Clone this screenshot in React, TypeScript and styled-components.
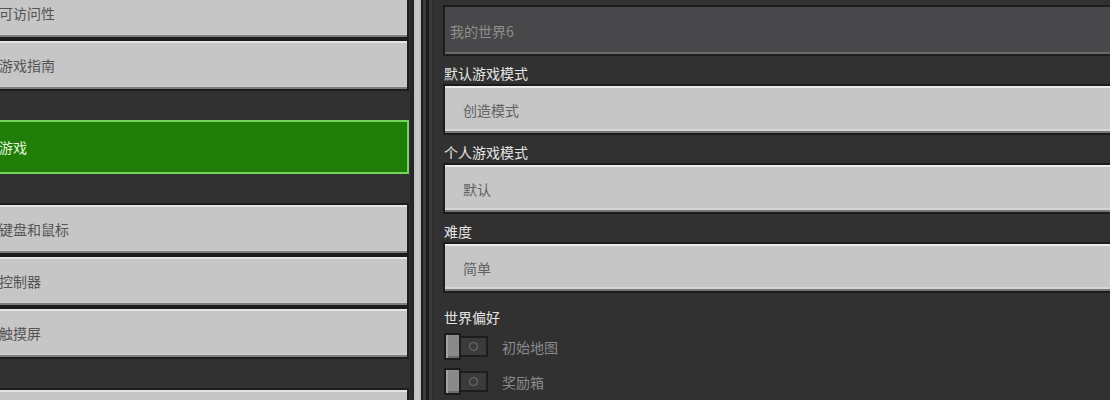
import React from "react";
import styled, { createGlobalStyle } from "styled-components";

const GlobalStyle = createGlobalStyle`
  html, body {
    margin: 0;
    padding: 0;
    height: 400px;
    overflow: hidden;
    background: #313132;
    font-family: "Noto Sans CJK SC", "Noto Sans", sans-serif;
  }
`;

const Page = styled.div`
  display: flex;
  flex-direction: row;
  width: 1110px;
  height: 400px;
  overflow: hidden;
  background: #313132;
`;

const NavPane = styled.nav`
  display: flex;
  flex-direction: column;
  gap: 29px;
  width: 424px;
  flex-shrink: 0;
  margin-left: -15px;
  margin-top: -13px;
`;

const NavGroup = styled.div`
  display: flex;
  flex-direction: column;
`;

const NavButton = styled.div<{ $active?: boolean }>`
  display: flex;
  align-items: center;
  box-sizing: border-box;
  height: ${(p) => (p.$active ? "54px" : "52px")};
  padding-left: 12px;
  font-size: 14px;
  background: ${(p) => (p.$active ? "#1f7d08" : "#c6c6c6")};
  color: ${(p) => (p.$active ? "#e2f4da" : "#545454")};
  border: 2px solid ${(p) => (p.$active ? "#72d65c" : "#1c1c1c")};
  box-shadow: ${(p) =>
    p.$active
      ? "none"
      : "inset 0 2px 0 #e4e4e4, inset 0 -2px 0 #7c7c7c, inset 0 -3px 0 #d0d0d0"};
`;

const Divider = styled.div`
  width: 24px;
  flex-shrink: 0;
  background: linear-gradient(
    to right,
    #313132 0px,
    #313132 1px,
    #262627 1px,
    #262627 5px,
    #bdbdbd 5px,
    #cbcbcb 8px,
    #bdbdbd 12px,
    #1e1e1e 12px,
    #1e1e1e 14px,
    #3c3c3d 14px,
    #3c3c3d 17px,
    #1a1a1a 17px,
    #1a1a1a 20px,
    #3a3a3b 20px,
    #3a3a3b 23px,
    #2c2c2d 23px
  );
`;

const SettingsPane = styled.section`
  display: flex;
  flex-direction: column;
  flex: 1;
  min-width: 0;
  padding: 5px 0 0 10px;
  margin-right: -30px;
`;

const TextField = styled.div`
  display: flex;
  align-items: center;
  box-sizing: border-box;
  height: 51px;
  padding-left: 5px;
  font-size: 14px;
  color: #8e8e8e;
  background: #48484a;
  border: 2px solid #1d1d1e;
  box-shadow: inset 0 -2px 0 #6a6a6b;
`;

const FieldLabel = styled.div`
  box-sizing: border-box;
  height: 28px;
  padding: 9px 0 0 1px;
  font-size: 14px;
  line-height: 16px;
  color: #e4e4e4;
`;

const Select = styled.div`
  display: flex;
  align-items: center;
  box-sizing: border-box;
  height: 51px;
  padding-left: 18px;
  font-size: 14px;
  color: #626262;
  background: #c6c6c6;
  border: 2px solid #1c1c1c;
  box-shadow: inset 0 2px 0 #ebebeb, inset 0 -2px 0 #767676,
    inset 0 -4px 0 #d6d6d6;
`;

const SectionLabel = styled.div`
  padding: 16px 0 0 1px;
  margin-bottom: 8px;
  font-size: 14px;
  line-height: 16px;
  color: #e4e4e4;
`;

const ToggleList = styled.div`
  display: flex;
  flex-direction: column;
  gap: 8px;
`;

const ToggleRow = styled.div`
  display: flex;
  align-items: center;
  height: 27px;
  padding-left: 1px;
`;

const Knob = styled.div`
  box-sizing: border-box;
  width: 17px;
  height: 27px;
  background: #8a8a8a;
  border: 2px solid #1c1c1c;
  box-shadow: inset 2px 0 0 #a2a2a2, inset 0 -2px 0 #6c6c6c;
  position: relative;
  z-index: 1;
`;

const Track = styled.div`
  display: flex;
  align-items: center;
  justify-content: center;
  box-sizing: border-box;
  width: 29px;
  height: 21px;
  margin-left: -2px;
  background: #3b3b3c;
  border: 2px solid #1e1e1e;
`;

const Ring = styled.span`
  box-sizing: border-box;
  width: 9px;
  height: 9px;
  border-radius: 50%;
  border: 1.5px solid #747474;
`;

const ToggleLabel = styled.span`
  margin-left: 14px;
  font-size: 14px;
  color: #8a8a8a;
`;

const Toggle = ({ label }: { label: string }) => (
  <ToggleRow>
    <Knob />
    <Track>
      <Ring />
    </Track>
    <ToggleLabel>{label}</ToggleLabel>
  </ToggleRow>
);

const fields = [
  { label: "默认游戏模式", value: "创造模式" },
  { label: "个人游戏模式", value: "默认" },
  { label: "难度", value: "简单" },
];

const App = () => {
  return (
    <>
      <GlobalStyle />
      <Page>
        <NavPane>
          <NavGroup>
            <NavButton>可访问性</NavButton>
            <NavButton>游戏指南</NavButton>
          </NavGroup>
          <NavGroup>
            <NavButton $active>游戏</NavButton>
          </NavGroup>
          <NavGroup>
            <NavButton>键盘和鼠标</NavButton>
            <NavButton>控制器</NavButton>
            <NavButton>触摸屏</NavButton>
          </NavGroup>
          <NavGroup>
            {/* next group starts below the visible area; only its top edge shows */}
            <NavButton />
          </NavGroup>
        </NavPane>
        <Divider />
        <SettingsPane>
          <TextField>我的世界6</TextField>
          {fields.map((f) => (
            <React.Fragment key={f.label}>
              <FieldLabel>{f.label}</FieldLabel>
              <Select>{f.value}</Select>
            </React.Fragment>
          ))}
          <SectionLabel>世界偏好</SectionLabel>
          <ToggleList>
            <Toggle label="初始地图" />
            <Toggle label="奖励箱" />
          </ToggleList>
        </SettingsPane>
      </Page>
    </>
  );
};

export default App;
